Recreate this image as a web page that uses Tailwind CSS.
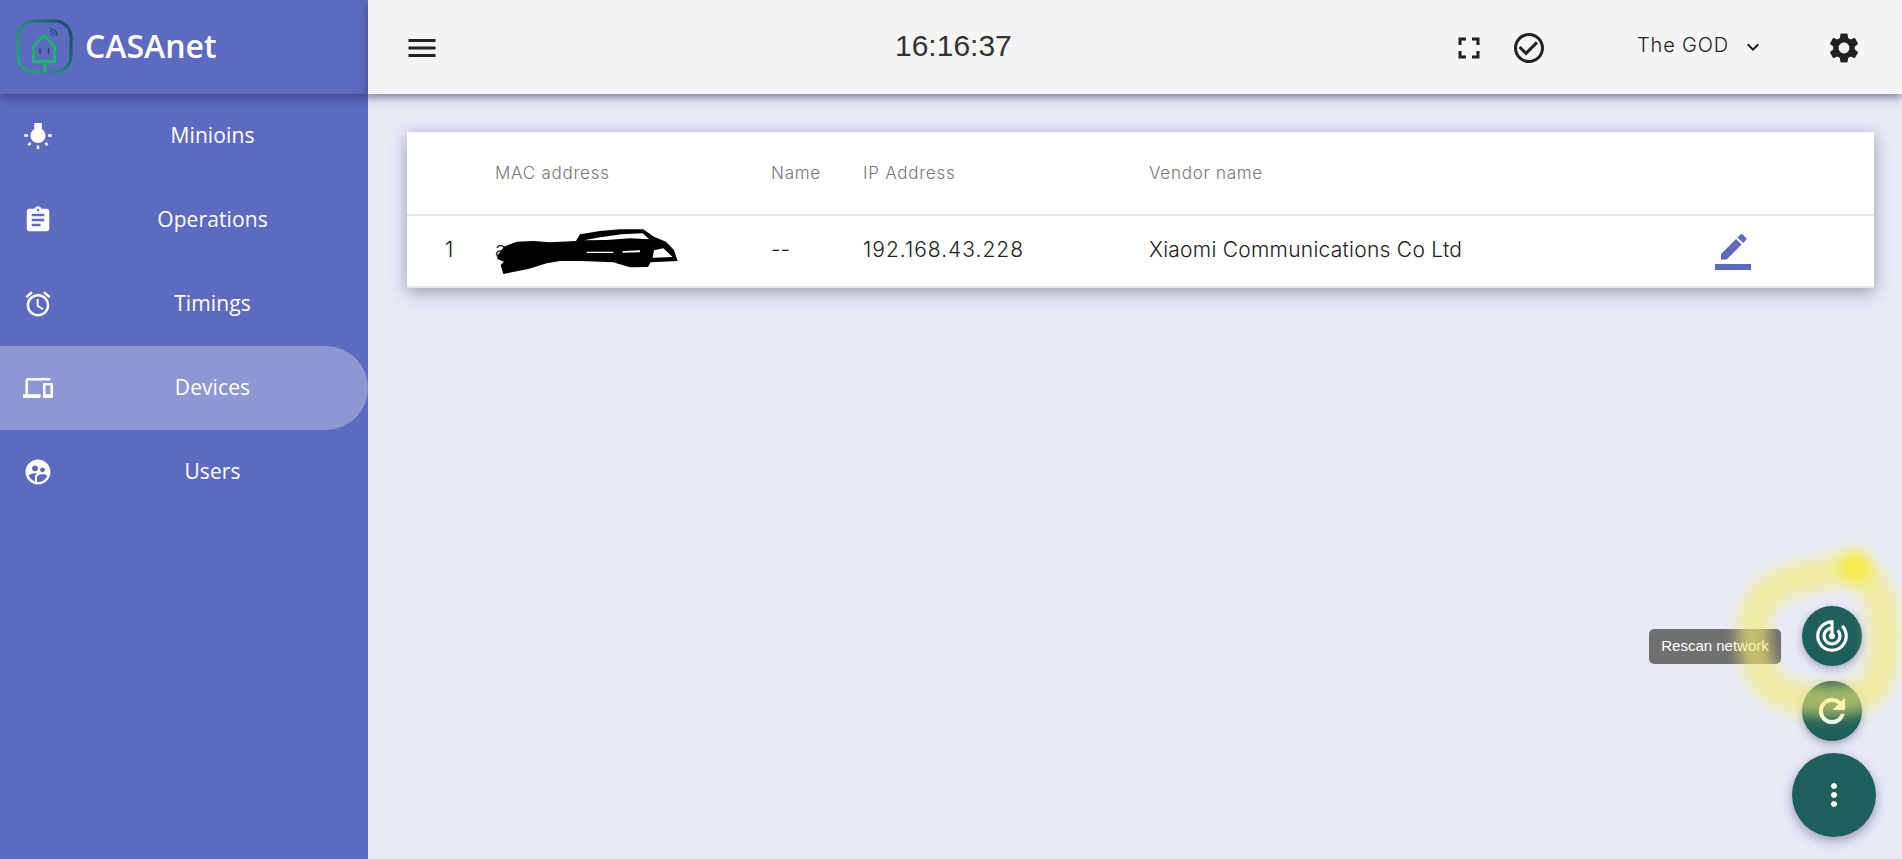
<!DOCTYPE html>
<html lang="en">
<head>
    <meta charset="UTF-8">
    <title>CASAnet</title>
    <script src="https://cdn.jsdelivr.net/npm/@tailwindcss/browser@4"></script>
</head>
<body class="relative h-[859px] w-[1902px] overflow-hidden bg-[#e8eaf6] font-['Inter',sans-serif]">
    <div class="flex h-full">
        <!-- sidebar -->
        <aside class="flex h-full w-[368px] shrink-0 flex-col bg-[#5c6bc0] text-white font-['Open_Sans',sans-serif]">
            <div class="flex h-[94px] shrink-0 items-center shadow-[0_4px_8px_rgba(30,35,90,0.45)]">
                <svg class="ml-[14px] h-[60px] w-[60px]" viewBox="14 16 60 60" fill="none">
                    <defs>
                        <linearGradient id="logoRing" x1="0" y1="1" x2="1" y2="0.3">
                            <stop offset="0" stop-color="#20b070"/>
                            <stop offset="0.55" stop-color="#1c8a72"/>
                            <stop offset="1" stop-color="#1a4f6c"/>
                        </linearGradient>
                    </defs>
                    <path d="M45 71H34a16 16 0 0 1-16-16V36a16 16 0 0 1 16-16h21a16 16 0 0 1 16 16v19a16 16 0 0 1-16 16h-5" stroke="url(#logoRing)" stroke-width="3"/>
                    <path d="M45 71V60.500H33.500V45L44 34.500L54.500 45V60.500H44" stroke="#20b070" stroke-width="3"/>
                    <path d="M40 47v6M48.500 47v6" stroke="#1a4f6c" stroke-width="1.500"/>
                    <path d="M50 33a1.500 1.500 0 0 1 2 2M50 30.500a4.500 4.500 0 0 1 5 4.500M50 28a7 7 0 0 1 7.500 7" stroke="#1a4f6c" stroke-width="1.100"/>
                </svg>
                <span class="ml-[11px] mb-[2px] text-[32px] font-semibold leading-none">CASAnet</span>
            </div>
            <nav class="text-[21px]">
                <a class="flex h-[84px] items-center">
                    <svg class="ml-[23px] h-[30px] w-[30px] fill-white" viewBox="0 0 24 24"><path d="M3.55 18.54l1.41 1.41 1.79-1.8-1.41-1.41-1.79 1.8zM11 22.45h2V19.5h-2v2.95zM4 10.5H1v2h3v-2zm11-4.19V1.5H9v4.81C7.21 7.35 6 9.28 6 11.5c0 3.31 2.69 6 6 6s6-2.69 6-6c0-2.22-1.21-4.15-3-5.19zm5 4.19v2h3v-2h-3zm-2.76 7.66l1.79 1.8 1.41-1.41-1.8-1.79-1.4 1.4z"/></svg>
                    <span class="flex-1 pr-[13px] pl-[17px] text-center tracking-[0.1px]">Minioins</span>
                </a>
                <a class="flex h-[84px] items-center">
                    <svg class="ml-[23px] h-[30px] w-[30px] fill-white" viewBox="0 0 24 24"><path d="M19 3h-4.180C14.400 1.840 13.300 1 12 1c-1.300 0-2.400.84-2.820 2H5c-1.100 0-2 .9-2 2v14c0 1.100.9 2 2 2h14c1.100 0 2-.9 2-2V5c0-1.100-.9-2-2-2zm-7 0c.55 0 1 .45 1 1s-.45 1-1 1-1-.45-1-1 .45-1 1-1zm2 14H7v-2h7v2zm3-4H7v-2h10v2zm0-4H7V7h10v2z"/></svg>
                    <span class="flex-1 pr-[13px] pl-[17px] text-center tracking-[0.1px]">Operations</span>
                </a>
                <a class="flex h-[84px] items-center">
                    <svg class="ml-[23px] h-[30px] w-[30px] fill-white" viewBox="0 0 24 24"><path d="M22 5.720l-4.600-3.860-1.290 1.530 4.600 3.860L22 5.720zM7.880 3.390L6.600 1.860 2 5.710l1.290 1.530 4.590-3.850zM12.500 8H11v6l4.750 2.850.75-1.230-4-2.370V8zM12 4c-4.970 0-9 4.030-9 9s4.020 9 9 9c4.970 0 9-4.030 9-9s-4.030-9-9-9zm0 16c-3.870 0-7-3.130-7-7s3.130-7 7-7 7 3.130 7 7-3.130 7-7 7z"/></svg>
                    <span class="flex-1 pr-[13px] pl-[17px] text-center tracking-[0.1px]">Timings</span>
                </a>
                <a class="flex h-[84px] items-center rounded-r-[42px] bg-[#8d97d3]">
                    <svg class="ml-[23px] h-[30px] w-[30px] fill-white" viewBox="0 0 24 24"><path d="M4 6h18V4H4c-1.100 0-2 .9-2 2v11H0v3h14v-3H4V6zm19 2h-6c-.55 0-1 .45-1 1v10c0 .55.45 1 1 1h6c.55 0 1-.45 1-1V9c0-.55-.45-1-1-1zm-1 9h-4v-7h4v7z"/></svg>
                    <span class="flex-1 pr-[13px] pl-[17px] text-center tracking-[0.1px]">Devices</span>
                </a>
                <a class="flex h-[84px] items-center">
                    <svg class="ml-[23px] h-[30px] w-[30px] fill-white" viewBox="0 0 24 24"><path d="M11.990 2c-5.520 0-10 4.480-10 10s4.480 10 10 10 10-4.480 10-10-4.480-10-10-10zm3.610 6.340c1.070 0 1.930.86 1.930 1.930 0 1.070-.86 1.930-1.930 1.930-1.070 0-1.930-.86-1.930-1.930-.01-1.070.86-1.930 1.930-1.930zm-6-1.580c1.300 0 2.360 1.060 2.360 2.360 0 1.300-1.060 2.360-2.360 2.360s-2.360-1.060-2.360-2.360c0-1.310 1.050-2.360 2.360-2.360zm0 9.130v3.750c-2.400-.75-4.300-2.600-5.140-4.960 1.050-1.120 3.670-1.690 5.140-1.690.53 0 1.200.08 1.900.22-1.640.87-1.900 2.020-1.900 2.680zM11.990 20c-.27 0-.53-.01-.79-.04v-4.070c0-1.420 2.940-2.130 4.400-2.130 1.070 0 2.920.39 3.840 1.150-1.170 2.970-4.060 5.090-7.450 5.090z"/></svg>
                    <span class="flex-1 pr-[13px] pl-[17px] text-center tracking-[0.1px]">Users</span>
                </a>
            </nav>
        </aside>

        <div class="flex min-w-0 flex-1 flex-col">
            <!-- top bar -->
            <header class="flex h-[94px] shrink-0 items-center bg-[#f5f5f5] text-[#212121] shadow-[0_4px_8px_rgba(40,40,60,0.5)]">
                <svg class="ml-[36px] mt-[2px] h-[36px] w-[36px] fill-[#212121]" viewBox="0 0 24 24"><path d="M3 18h18v-2H3v2zm0-5h18v-2H3v2zm0-7v2h18V6H3z"/></svg>
                <span class="ml-[455px] mb-[2px] w-[116px] font-['Liberation_Sans',sans-serif] text-[30px] leading-none text-[#333]">16:16:37</span>
                <svg class="ml-[440px] mt-[2px] h-[36px] w-[36px] fill-[#212121]" viewBox="0 0 24 24"><path d="M7 14H5v5h5v-2H7v-3zm-2-4h2V7h3V5H5v5zm12 7h-3v2h5v-5h-2v3zM14 5v2h3v3h2V5h-5z"/></svg>
                <svg class="ml-[24px] mt-[2px] h-[36px] w-[36px] fill-[#212121]" viewBox="0 0 24 24"><path d="M16.590 7.580L10 14.170l-3.590-3.580L5 12l5 5 8-8zM12 2C6.480 2 2 6.480 2 12s4.480 10 10 10 10-4.480 10-10S17.520 2 12 2zm0 18c-4.420 0-8-3.580-8-8s3.580-8 8-8 8 3.580 8 8-3.580 8-8 8z"/></svg>
                <span class="ml-[90px] mb-[4px] text-[20px] font-light leading-none tracking-[0.85px]">The GOD</span>
                <svg class="ml-[12px] h-[24px] w-[24px] fill-[#212121]" viewBox="0 0 24 24"><path d="M16.590 8.590L12 13.170 7.410 8.590 6 10l6 6 6-6z"/></svg>
                <svg class="ml-[61px] mt-[2px] h-[36px] w-[36px] fill-[#212121]" viewBox="0 0 24 24"><path d="M19.140 12.940c.04-.3.06-.61.06-.94 0-.32-.02-.64-.07-.94l2.030-1.580c.18-.14.23-.41.12-.61l-1.920-3.320c-.12-.22-.37-.29-.59-.22l-2.390.96c-.5-.38-1.030-.7-1.620-.94l-.36-2.540c-.04-.24-.24-.41-.48-.41h-3.840c-.24 0-.43.17-.47.41l-.36 2.540c-.59.24-1.130.57-1.620.94l-2.390-.96c-.22-.08-.47 0-.59.22L2.740 8.870c-.12.21-.08.47.12.61l2.030 1.580c-.05.3-.09.63-.09.94s.02.64.07.94l-2.030 1.580c-.18.14-.23.41-.12.61l1.920 3.320c.12.22.37.29.59.22l2.390-.96c.5.38 1.030.7 1.620.94l.36 2.540c.05.24.24.41.48.41h3.840c.24 0 .44-.17.47-.41l.36-2.540c.59-.24 1.130-.56 1.620-.94l2.390.96c.22.08.47 0 .59-.22l1.920-3.320c.12-.22.07-.47-.12-.61l-2.010-1.580zM12 15.600c-1.980 0-3.600-1.620-3.600-3.600s1.620-3.600 3.600-3.600 3.600 1.620 3.600 3.600-1.620 3.600-3.600 3.600z"/></svg>
            </header>

            <!-- devices table -->
            <main class="px-[28px] pt-[38px] pl-[39px]">
                <div class="w-[1467px] bg-white shadow-[0_4px_16px_rgba(30,35,80,0.4)]">
                    <div class="flex h-[84px] items-center border-b-2 border-[#e6e6e6] pt-[2px] text-[17px] font-light tracking-[0.75px] text-[#777]">
                        <span class="w-[88px]"></span>
                        <span class="w-[276px]">MAC address</span>
                        <span class="w-[92px]">Name</span>
                        <span class="w-[286px]">IP Address</span>
                        <span>Vendor name</span>
                    </div>
                    <div class="flex h-[72px] items-center border-b-2 border-[#e6e6e6] pb-[2px] text-[21px] font-light text-[#212121]">
                        <span class="w-[88px] pl-[38px]">1</span>
                        <span class="w-[276px]">a</span>
                        <span class="w-[92px]">--</span>
                        <span class="w-[286px] tracking-[1px]">192.168.43.228</span>
                        <span class="w-[566px] tracking-[0.26px]">Xiaomi Communications Co Ltd</span>
                        <svg class="mt-[4px] h-[36px] w-[36px] fill-[#5c6bc0]" viewBox="0 0 24 24"><path d="M17.750 7L14 3.250l-10 10V17h3.750l10-10zm2.960-2.960c.39-.39.39-1.020 0-1.410L18.370.29c-.39-.39-1.020-.39-1.410 0L15 2.250 18.750 6l1.960-1.960z"/><path d="M0 20h24v4H0z"/></svg>
                    </div>
                </div>
            </main>
        </div>
    </div>

    <!-- marker scribble drawn over the MAC address -->
    <svg class="pointer-events-none absolute inset-0 h-[859px] w-[1902px]" viewBox="0 0 1902 859">
        <path transform="translate(400 125) scale(0.3333)" fill="#000" fill-rule="evenodd" d="M292 392L312 365L350 350L400 348L450 352L528 348L540 328L600 318L660 313L730 313L762 335L798 350L822 375L833 408L752 412L744 426L690 427L640 412L545 408L480 408L440 415L385 432L310 447L302 420L312 410L292 402ZM552 346L600 337L665 328L728 325L748 343L690 340L620 345ZM762 376L790 370L818 396L758 398ZM560 380L640 380L640 384L560 384ZM668 378L720 376L720 382L668 383Z"/>
    </svg>

    <!-- speed dial -->
    <div class="absolute left-[1649px] top-[629px] flex h-[35px] w-[132px] items-center justify-center rounded-[5px] bg-[#707070] font-['Liberation_Sans',sans-serif] text-[15px] text-white">Rescan network</div>
    <button class="absolute left-[1802px] top-[606px] flex h-[60px] w-[60px] items-center justify-center rounded-full bg-[#1f5f5b] shadow-[0_3px_8px_rgba(30,35,80,0.35)]">
        <svg class="h-[38px] w-[38px] fill-white" viewBox="0 0 24 24"><path d="M19.070 4.930l-1.410 1.410C19.100 7.790 20 9.790 20 12c0 4.420-3.580 8-8 8s-8-3.580-8-8c0-4.080 3.050-7.440 7-7.930v2.020C8.160 6.570 6 9.030 6 12c0 3.310 2.690 6 6 6s6-2.690 6-6c0-1.660-.67-3.160-1.760-4.240l-1.410 1.410C15.550 9.900 16 10.900 16 12c0 2.210-1.790 4-4 4s-4-1.790-4-4c0-1.860 1.280-3.410 3-3.860v2.140c-.6.35-1 .98-1 1.720 0 1.100.9 2 2 2s2-.9 2-2c0-.74-.4-1.380-1-1.720V2h-1C6.480 2 2 6.480 2 12s4.480 10 10 10 10-4.480 10-10c0-2.760-1.120-5.260-2.930-7.070z"/></svg>
    </button>
    <button class="absolute left-[1802px] top-[681px] flex h-[60px] w-[60px] items-center justify-center rounded-full bg-[#1f5f5b] shadow-[0_3px_8px_rgba(30,35,80,0.35)]">
        <svg class="h-[38px] w-[38px] fill-white stroke-white stroke-[0.6]" viewBox="0 0 24 24"><path d="M17.650 6.350C16.200 4.900 14.210 4 12 4c-4.420 0-7.990 3.580-7.990 8s3.570 8 7.990 8c3.730 0 6.840-2.550 7.730-6h-2.080c-.82 2.330-3.040 4-5.650 4-3.310 0-6-2.690-6-6s2.690-6 6-6c1.660 0 3.140.69 4.220 1.780L13 11h7V4l-2.350 2.350z"/></svg>
    </button>
    <button class="absolute left-[1792px] top-[753px] flex h-[84px] w-[84px] items-center justify-center rounded-full bg-[#1f5f5b] shadow-[0_4px_12px_rgba(30,35,80,0.4)]">
        <svg class="h-[36px] w-[36px] fill-white" viewBox="0 0 24 24"><path d="M12 8c1.100 0 2-.9 2-2s-.9-2-2-2-2 .9-2 2 .9 2 2 2zm0 2c-1.100 0-2 .9-2 2s.9 2 2 2 2-.9 2-2-.9-2-2-2zm0 6c-1.100 0-2 .9-2 2s.9 2 2 2 2-.9 2-2-.9-2-2-2z"/></svg>
    </button>

    <!-- yellow highlighter ring, part of the picture -->
    <svg class="pointer-events-none absolute inset-0 h-[859px] w-[1902px] blur-[7px]" viewBox="0 0 1902 859" fill="none">
        <path d="M1855 567C1835 572 1805 575 1787 582C1765 590 1753 605 1753 630C1753 660 1760 680 1777 690C1795 702 1840 703 1860 696C1880 688 1884 665 1884 640C1885 615 1880 590 1866 578" stroke="#f6ee70" stroke-opacity="0.62" stroke-width="32" stroke-linecap="round"/>
        <circle cx="1855" cy="567" r="17" fill="#f8ee30" fill-opacity="0.8"/>
    </svg>
</body>
</html>
